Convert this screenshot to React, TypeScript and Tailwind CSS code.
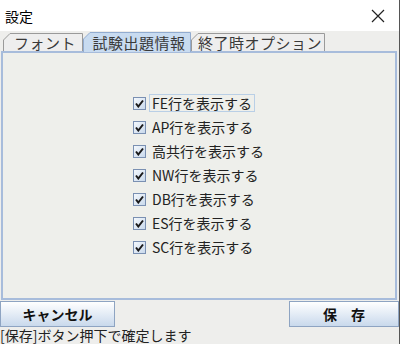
const items = [
  "FE行を表示する",
  "AP行を表示する",
  "高共行を表示する",
  "NW行を表示する",
  "DB行を表示する",
  "ES行を表示する",
  "SC行を表示する",
];

function Tab({ label, width, selected }: { label: string; width: number; selected?: boolean }) {
  const h = selected ? 20 : 18;
  return (
    <div
      className={`relative flex items-center justify-center ${selected ? "h-[20px] -mb-[1px] z-10" : "h-[18px]"}`}
      style={{ width }}
    >
      <svg className="absolute inset-0" width={width} height={h}>
        <path
          d={`M0.5 ${h} L0.5 7 L7 0.5 L${width - 0.5} 0.5 L${width - 0.5} ${h}`}
          fill={selected ? "#c8dbf0" : "#eeeeee"}
          stroke={selected ? "#92acd0" : "#9a9a9a"}
        />
      </svg>
      <span className="relative text-[15px] leading-none text-[#3a3a3a] pl-[4px] pt-[1px] tracking-[0.5px]">{label}</span>
    </div>
  );
}

function Check({ label, focused }: { label: string; focused?: boolean }) {
  return (
    <div className="h-[24px] flex items-center">
      <div className="w-[13px] h-[13px] border border-[#7a90b2] bg-gradient-to-br from-[#f4f8fc] to-[#c9d9ec] flex items-center justify-center">
        <svg width="9" height="9" viewBox="0 0 9 9">
          <path d="M1 4.5 L3.3 7.5 L8 1.5" fill="none" stroke="#1a1a1a" strokeWidth="2" />
        </svg>
      </div>
      <span
        className={`ml-[3px] px-[2px] text-[14px] leading-[16px] text-[#222] border ${focused ? "border-[#b9cfe6]" : "border-transparent"}`}
      >
        {label}
      </span>
    </div>
  );
}

export default function App() {
  return (
    <div
      className="w-[400px] h-[344px] bg-[#eeeeec] flex flex-col overflow-hidden border-r border-[#555]"
      style={{ fontFamily: '"Noto Sans CJK JP", "Noto Sans", sans-serif' }}
    >
      <div className="h-[31px] shrink-0 bg-white flex items-center justify-between pl-[5px] pr-[14px]">
        <span className="text-[14px] text-black leading-none">設定</span>
        <svg width="14" height="14" viewBox="0 0 14 14">
          <path d="M1 1 L13 13 M13 1 L1 13" stroke="#222" strokeWidth="1.2" />
        </svg>
      </div>
      <div className="h-[20px] shrink-0 flex items-end pl-[3px]">
        <Tab label="フォント" width={80} />
        <Tab label="試験出題情報" width={108} selected />
        <Tab label="終了時オプション" width={134} />
      </div>
      <div className="h-[249px] shrink-0 mx-[1px] mr-[2px] border-2 border-[#a7bcdb] bg-[#eeefeb] flex flex-col pl-[130px] pt-[38px]">
        {items.map((t, i) => (
          <Check key={t} label={t} focused={i === 0} />
        ))}
      </div>
      <div className="h-[27px] shrink-0 flex justify-between items-stretch pt-[1px]">
        <button className="w-[115px] border border-[#8ea4c2] bg-gradient-to-b from-white to-[#c9d9ec] text-[14px] font-bold text-[#111]">
          キャンセル
        </button>
        <button className="w-[110px] border border-[#8ea4c2] bg-gradient-to-b from-white to-[#c9d9ec] text-[14px] font-bold text-[#111]">
          保　存
        </button>
      </div>
      <div className="h-[17px] shrink-0 text-[14px] leading-[16px] text-[#222] whitespace-nowrap">
        [保存]ボタン押下で確定します
      </div>
    </div>
  );
}
